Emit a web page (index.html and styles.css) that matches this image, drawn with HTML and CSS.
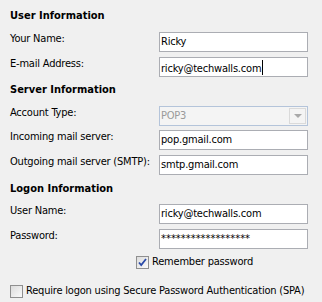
FILE: index.html
```html
<!DOCTYPE html>
<html lang="en">
<head>
    <meta charset="UTF-8">
    <title>Account Settings</title>
    <link rel="stylesheet" href="styles.css">
</head>
<body>
<div class="panel">
    <h2 class="group-title">User Information</h2>
    <div class="rows">
        <label class="label">Your Name:</label>
        <div class="field">Ricky</div>
        <label class="label">E-mail Address:</label>
        <div class="field">ricky@techwalls.com<span class="caret"></span></div>
    </div>

    <h2 class="group-title server">Server Information</h2>
    <div class="rows">
        <label class="label">Account Type:</label>
        <div class="select disabled">
            <span class="select-text">POP3</span>
            <span class="select-btn"><span class="arrow"></span></span>
        </div>
        <label class="label">Incoming mail server:</label>
        <div class="field">pop.gmail.com</div>
        <label class="label">Outgoing mail server (SMTP):</label>
        <div class="field">smtp.gmail.com</div>
    </div>

    <h2 class="group-title logon">Logon Information</h2>
    <div class="rows">
        <label class="label">User Name:</label>
        <div class="field">ricky@techwalls.com</div>
        <label class="label">Password:</label>
        <div class="field password">******************</div>
    </div>

    <div class="check remember">
        <span class="box checked">
            <svg width="9" height="9" viewBox="0 0 9 9"><path d="M1 4.5 L3.2 7 L8 1" fill="none" stroke="#2a4aa8" stroke-width="1.8"/></svg>
        </span>
        <span>Remember password</span>
    </div>

    <div class="check spa">
        <span class="box"></span>
        <span>Require logon using Secure Password Authentication (SPA)</span>
    </div>
</div>
</body>
</html>
```

FILE: styles.css
```css
* {
    margin: 0;
    padding: 0;
    box-sizing: border-box;
}
body {
    background: #f0f0f0;
    color: #000;
    font-family: "DejaVu Sans Condensed", "DejaVu Sans", sans-serif;
    font-size: 11px;
    line-height: 14px;
    letter-spacing: -0.2px;
}
.panel {
    padding: 9px 14px 0 10px;
}
.group-title {
    font-size: 11px;
    font-weight: bold;
    line-height: 14px;
    letter-spacing: 0;
    margin-bottom: 9px;
}
.group-title.server {
    margin-top: 6px;
}
.group-title.logon {
    margin-top: 7px;
    margin-bottom: 8px;
}
.rows {
    display: grid;
    grid-template-columns: 149px 149px;
    row-gap: 5px;
}
.label {
    line-height: 14px;
    white-space: nowrap;
}
.field {
    height: 20px;
    border: 1px solid #abadb3;
    background: #fff;
    padding: 2px 1px 0;
    line-height: 14px;
    white-space: nowrap;
}
.field.password {
    letter-spacing: 0;
}
.caret {
    display: inline-block;
    width: 1px;
    height: 15px;
    background: #000;
    vertical-align: -3px;
    margin-left: 1px;
}
.select {
    height: 20px;
    border: 1px solid #b4c4da;
    background: #f4f4f4;
    display: flex;
    align-items: stretch;
    margin-bottom: -1px;
}
.select-text {
    flex: 1;
    color: #9a9a9a;
    padding: 2px 1px 0;
}
.select-btn {
    width: 17px;
    margin: 1px;
    border: 1px solid #dadada;
    background: #f4f4f4;
    display: flex;
    align-items: center;
    justify-content: center;
}
.arrow {
    width: 0;
    height: 0;
    border-left: 4px solid transparent;
    border-right: 4px solid transparent;
    border-top: 4px solid #a9a9a9;
}
.check {
    display: flex;
    align-items: center;
    gap: 3px;
    white-space: nowrap;
}
.remember {
    margin-top: 6px;
    padding-left: 126px;
}
.spa {
    margin-top: 15px;
}
.box {
    width: 13px;
    height: 13px;
    border: 1px solid #8f8f8f;
    background: linear-gradient(135deg, #dcdcdc, #fafafa);
    display: flex;
    align-items: center;
    justify-content: center;
}
```
